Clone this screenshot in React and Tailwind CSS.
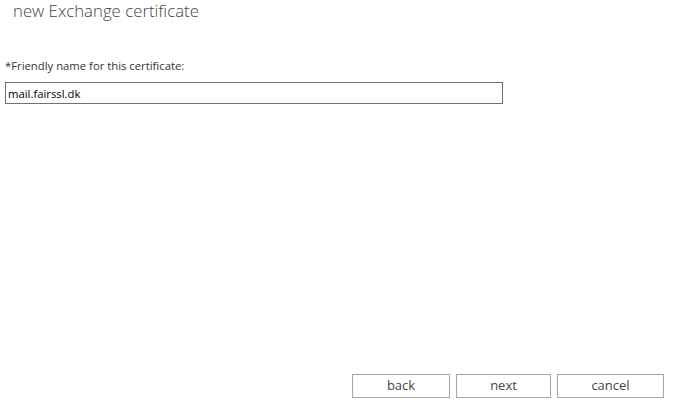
import React from "react";

const font = { fontFamily: '"Segoe UI", "Open Sans", "Noto Sans", sans-serif' };

const App = () => {
  return (
    <div
      className="flex flex-col w-[673px] h-[406px] bg-white text-[#333333] overflow-hidden"
      style={font}
    >
      <h1 className="pl-[13px] pt-[0px] text-[16.8px] font-light leading-[22px] text-[#444444]">
        new Exchange certificate
      </h1>

      <div className="pl-[5px] pt-[37px]">
        <label className="block text-[11.3px] leading-[14px] text-[#333333]">
          *Friendly name for this certificate:
        </label>
        <input
          type="text"
          defaultValue="mail.fairssl.dk"
          className="mt-[9px] w-[498px] h-[22px] border border-[#707070] px-[2px] text-[11.3px] text-black outline-none"
        />
      </div>

      <div className="mt-auto flex justify-end gap-[6px] pr-[9px] pb-[8px]">
        <button className="w-[98px] h-[24px] border border-[#a6a6a6] bg-white text-[13px] text-[#444444]">
          back
        </button>
        <button className="w-[95px] h-[24px] border border-[#a6a6a6] bg-white text-[13px] text-[#444444]">
          next
        </button>
        <button className="w-[107px] h-[24px] border border-[#a6a6a6] bg-white text-[13px] text-[#444444]">
          cancel
        </button>
      </div>
    </div>
  );
};

export default App;
